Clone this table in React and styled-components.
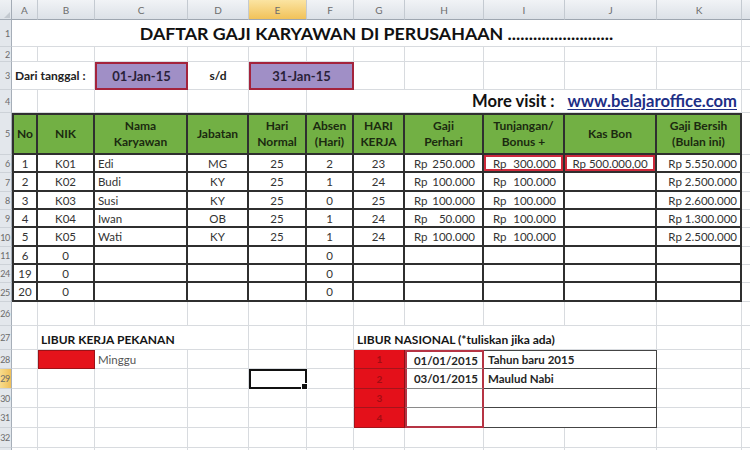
import React from 'react';
import styled, { createGlobalStyle, css } from 'styled-components';

const GlobalStyle = createGlobalStyle`
  html, body {
    margin: 0;
    padding: 0;
    background: #fff;
    overflow: hidden;
  }
  body {
    font-family: Lato, "Liberation Sans", sans-serif;
  }
`;

const COLS = [
  { key: 'A', w: 26 }, { key: 'B', w: 57 }, { key: 'C', w: 93 }, { key: 'D', w: 61 },
  { key: 'E', w: 58 }, { key: 'F', w: 47 }, { key: 'G', w: 51 }, { key: 'H', w: 79 },
  { key: 'I', w: 81 }, { key: 'J', w: 92 }, { key: 'K', w: 85 }, { key: 'L', w: 90 },
];

// header row + sheet rows 1..11, 24..33 (12-23 are hidden)
const ROW_HEIGHTS = [20, 27, 15, 28, 23, 42, 18, 19, 18, 18, 19, 18, 18, 19, 24, 24, 19, 20, 19, 20, 20, 20];

const LINE = '#2f2f2f';
const GRID = '#d8dbdf';

const Sheet = styled.div`
  display: grid;
  grid-template-columns: 12px ${COLS.map((c) => `${c.w}px`).join(' ')};
  grid-template-rows: ${ROW_HEIGHTS.map((h) => `${h}px`).join(' ')};
  width: 750px;
  height: 450px;
  overflow: hidden;
  color: #2c2c2c;
  font-size: 11.5px;
`;

const Corner = styled.div`
  position: relative;
  background: linear-gradient(#eef1f4, #dde2e8);
  border-right: 1px solid #a3abb5;
  border-bottom: 1px solid #a3abb5;

  &::after {
    content: '';
    position: absolute;
    right: 1px;
    bottom: 1px;
    border-left: 6px solid transparent;
    border-bottom: 6px solid #c3c9d0;
  }
`;

const ColHead = styled.div`
  display: flex;
  align-items: center;
  justify-content: center;
  font-size: 10px;
  color: #6d6d6d;
  background: ${(p) => (p.$active ? 'linear-gradient(#fbe4a2, #f1c259)' : 'linear-gradient(#f1f3f6, #dce1e7)')};
  border-right: 1px solid #c4cad1;
  border-bottom: 1px solid #9ea6b0;
`;

const RowHead = styled.div`
  display: flex;
  align-items: center;
  justify-content: flex-end;
  overflow: hidden;
  white-space: nowrap;
  padding-right: 1px;
  font-size: 9px;
  letter-spacing: -0.3px;
  color: #6b6b6b;
  background: ${(p) => (p.$active ? 'linear-gradient(90deg, #f8dc8c, #f0c05a)' : '#e3e7ec')};
  border-right: 1px solid #a6aeb8;
  border-bottom: 1px solid #cdd2d8;
`;

const Cell = styled.div`
  grid-column: span ${(p) => p.$span || 1};
  box-sizing: border-box;
  display: flex;
  align-items: center;
  justify-content: ${(p) => p.$align || 'flex-start'};
  min-width: 0;
  padding: 0 3px;
  white-space: nowrap;
  border-right: 1px solid ${GRID};
  border-bottom: 1px solid ${GRID};
`;

const Title = styled(Cell)`
  justify-content: center;
  font-size: 17.8px;
  font-weight: 700;
  color: #111;
`;

const Label = styled(Cell)`
  font-weight: 700;
  font-size: 12px;
  color: #222;
  padding-left: 3px;
`;

const DateBox = styled(Cell)`
  justify-content: center;
  background: #a08fc6;
  border: 2px solid #a4233c;
  font-weight: 700;
  font-size: 13px;
  color: #2a2238;
`;

const Visit = styled(Cell)`
  justify-content: flex-end;
  gap: 13px;
  padding-right: 4px;
  font-size: 16.6px;
  font-weight: 700;
  color: #111;
`;

const Link = styled.span`
  color: #1d2f86;
  text-decoration: underline;
  text-underline-offset: 2px;
`;

const tableEdges = css`
  border-right: 2px solid ${LINE};
  border-bottom: 2px solid ${LINE};
  ${(p) => p.$first && `border-left: 2px solid ${LINE};`}
`;

const Head = styled(Cell)`
  ${tableEdges};
  border-top: 2px solid ${LINE};
  justify-content: center;
  text-align: center;
  white-space: normal;
  padding: 0 2px;
  background: #72b044;
  font-size: 12px;
  font-weight: 700;
  line-height: 16px;
  color: #1b2a10;
`;

const Data = styled(Cell)`
  ${tableEdges};
  color: #333;
  ${(p) => p.$mark && 'box-shadow: inset 0 0 0 2px #cd2a3b;'}
`;

const Money = styled(Data)`
  justify-content: space-between;
  padding: 0 7px 0 9px;
`;

const Section = styled(Cell)`
  font-size: 12px;
  font-weight: 700;
  color: #151515;
  align-items: flex-end;
  padding-bottom: 2px;
`;

const Swatch = styled(Cell)`
  background: #e5131b;
  border: 1px solid #9c1217;
`;

const Note = styled(Cell)`
  color: #555;
`;

const Selected = styled(Cell)`
  position: relative;
  border: 2px solid #111;

  &::after {
    content: '';
    position: absolute;
    right: -3px;
    bottom: -3px;
    width: 5px;
    height: 5px;
    background: #111;
    border: 1px solid #fff;
  }
`;

const RedNum = styled(Cell)`
  justify-content: center;
  background: #e4101a;
  color: #a40c12;
  font-size: 10px;
  font-weight: 700;
  border-right: 1px solid #8f0f14;
  border-bottom: 1px solid #a5141b;
  border-left: 1px solid #a5141b;
`;

const HolidayDate = styled(Cell)`
  justify-content: flex-end;
  padding-right: 4px;
  font-weight: 700;
  color: #252525;
  border-left: 2.5px solid #b63444;
  border-right: 2.5px solid #b63444;
  border-bottom: ${(p) => (p.$last ? '2.5px solid #b63444' : '1px solid #8a8a8a')};
  ${(p) => p.$first && 'border-top: 2.5px solid #b63444;'}
`;

const HolidayName = styled(Cell)`
  font-weight: 700;
  color: #252525;
  padding-left: 4px;
  border-right: 1.5px solid #444;
  border-bottom: 1.5px solid #444;
  ${(p) => p.$first && 'border-top: 1.5px solid #444;'}
`;

const Blanks = ({ n }) => Array.from({ length: n }, (_, i) => <Cell key={`b${i}`} />);

const staff = [
  { row: 6, no: 1, nik: 'K01', nama: 'Edi', jab: 'MG', normal: 25, absen: 2, kerja: 23, gaji: '250.000', bonus: '300.000', kas: 'Rp 500.000,00', bersih: 'Rp 5.550.000' },
  { row: 7, no: 2, nik: 'K02', nama: 'Budi', jab: 'KY', normal: 25, absen: 1, kerja: 24, gaji: '100.000', bonus: '100.000', bersih: 'Rp 2.500.000' },
  { row: 8, no: 3, nik: 'K03', nama: 'Susi', jab: 'KY', normal: 25, absen: 0, kerja: 25, gaji: '100.000', bonus: '100.000', bersih: 'Rp 2.600.000' },
  { row: 9, no: 4, nik: 'K04', nama: 'Iwan', jab: 'OB', normal: 25, absen: 1, kerja: 24, gaji: '50.000', bonus: '100.000', bersih: 'Rp 1.300.000' },
  { row: 10, no: 5, nik: 'K05', nama: 'Wati', jab: 'KY', normal: 25, absen: 1, kerja: 24, gaji: '100.000', bonus: '100.000', bersih: 'Rp 2.500.000' },
  { row: 11, no: 6, nik: '0', absen: 0 },
  { row: 24, no: 19, nik: '0', absen: 0 },
  { row: 25, no: 20, nik: '0', absen: 0 },
];

const holidays = [
  { row: 28, n: 1, date: '01/01/2015', name: 'Tahun baru 2015' },
  { row: 29, n: 2, date: '03/01/2015', name: 'Maulud Nabi' },
  { row: 30, n: 3 },
  { row: 31, n: 4 },
];

const Rp = ({ value, mark }) => (
  <Money $mark={mark}>
    {value && <span>Rp</span>}
    {value && <span>{value}</span>}
  </Money>
);

export default function App() {
  return (
    <>
      <GlobalStyle />
      <Sheet>
        <Corner />
        {COLS.map((c) => (
          <ColHead key={c.key} $active={c.key === 'E'}>{c.key === 'L' ? '' : c.key}</ColHead>
        ))}

        <RowHead>1</RowHead>
        <Title $span={11}>DAFTAR GAJI KARYAWAN DI PERUSAHAAN .........................</Title>
        <Blanks n={1} />

        <RowHead>2</RowHead>
        <Blanks n={12} />

        <RowHead>3</RowHead>
        <Label $span={2}>Dari tanggal :</Label>
        <DateBox>01-Jan-15</DateBox>
        <Label $align="center">s/d</Label>
        <DateBox $span={2}>31-Jan-15</DateBox>
        <Blanks n={6} />

        <RowHead>4</RowHead>
        <Blanks n={5} />
        <Visit $span={6}>
          <span>More visit :</span>
          <Link>www.belajaroffice.com</Link>
        </Visit>
        <Blanks n={1} />

        <RowHead>5</RowHead>
        <Head $first>No</Head>
        <Head>NIK</Head>
        <Head>Nama<br />Karyawan</Head>
        <Head>Jabatan</Head>
        <Head>Hari<br />Normal</Head>
        <Head>Absen<br />(Hari)</Head>
        <Head>HARI<br />KERJA</Head>
        <Head>Gaji<br />Perhari</Head>
        <Head>Tunjangan/<br />Bonus +</Head>
        <Head>Kas Bon</Head>
        <Head>Gaji Bersih<br />(Bulan ini)</Head>
        <Blanks n={1} />

        {staff.map((s) => (
          <React.Fragment key={s.row}>
            <RowHead>{s.row}</RowHead>
            <Data $first $align="center">{s.no}</Data>
            <Data $align="center">{s.nik}</Data>
            <Data>{s.nama}</Data>
            <Data $align="center">{s.jab}</Data>
            <Data $align="center">{s.normal}</Data>
            <Data $align="center">{s.absen}</Data>
            <Data $align="center">{s.kerja}</Data>
            <Rp value={s.gaji} />
            <Rp value={s.bonus} mark={s.row === 6} />
            <Data $align="center" $mark={s.row === 6}>{s.kas}</Data>
            <Data $align="flex-end">{s.bersih}</Data>
            <Cell />
          </React.Fragment>
        ))}

        <RowHead>26</RowHead>
        <Blanks n={12} />

        <RowHead>27</RowHead>
        <Cell />
        <Section $span={3}>LIBUR KERJA PEKANAN</Section>
        <Blanks n={2} />
        <Section $span={4}>LIBUR NASIONAL (*tuliskan jika ada)</Section>
        <Blanks n={2} />

        {holidays.map((h, i) => (
          <React.Fragment key={h.row}>
            <RowHead $active={h.row === 29}>{h.row}</RowHead>
            <Cell />
            {h.row === 28 ? <Swatch /> : <Cell />}
            {h.row === 28 ? <Note>Minggu</Note> : <Cell />}
            <Cell />
            {h.row === 29 ? <Selected /> : <Cell />}
            <Cell />
            <RedNum>{h.n}</RedNum>
            <HolidayDate $first={i === 0} $last={i === holidays.length - 1}>{h.date}</HolidayDate>
            <HolidayName $span={2} $first={i === 0}>{h.name}</HolidayName>
            <Blanks n={2} />
          </React.Fragment>
        ))}

        <RowHead>32</RowHead>
        <Blanks n={12} />
        <RowHead />
        <Blanks n={12} />
      </Sheet>
    </>
  );
}
